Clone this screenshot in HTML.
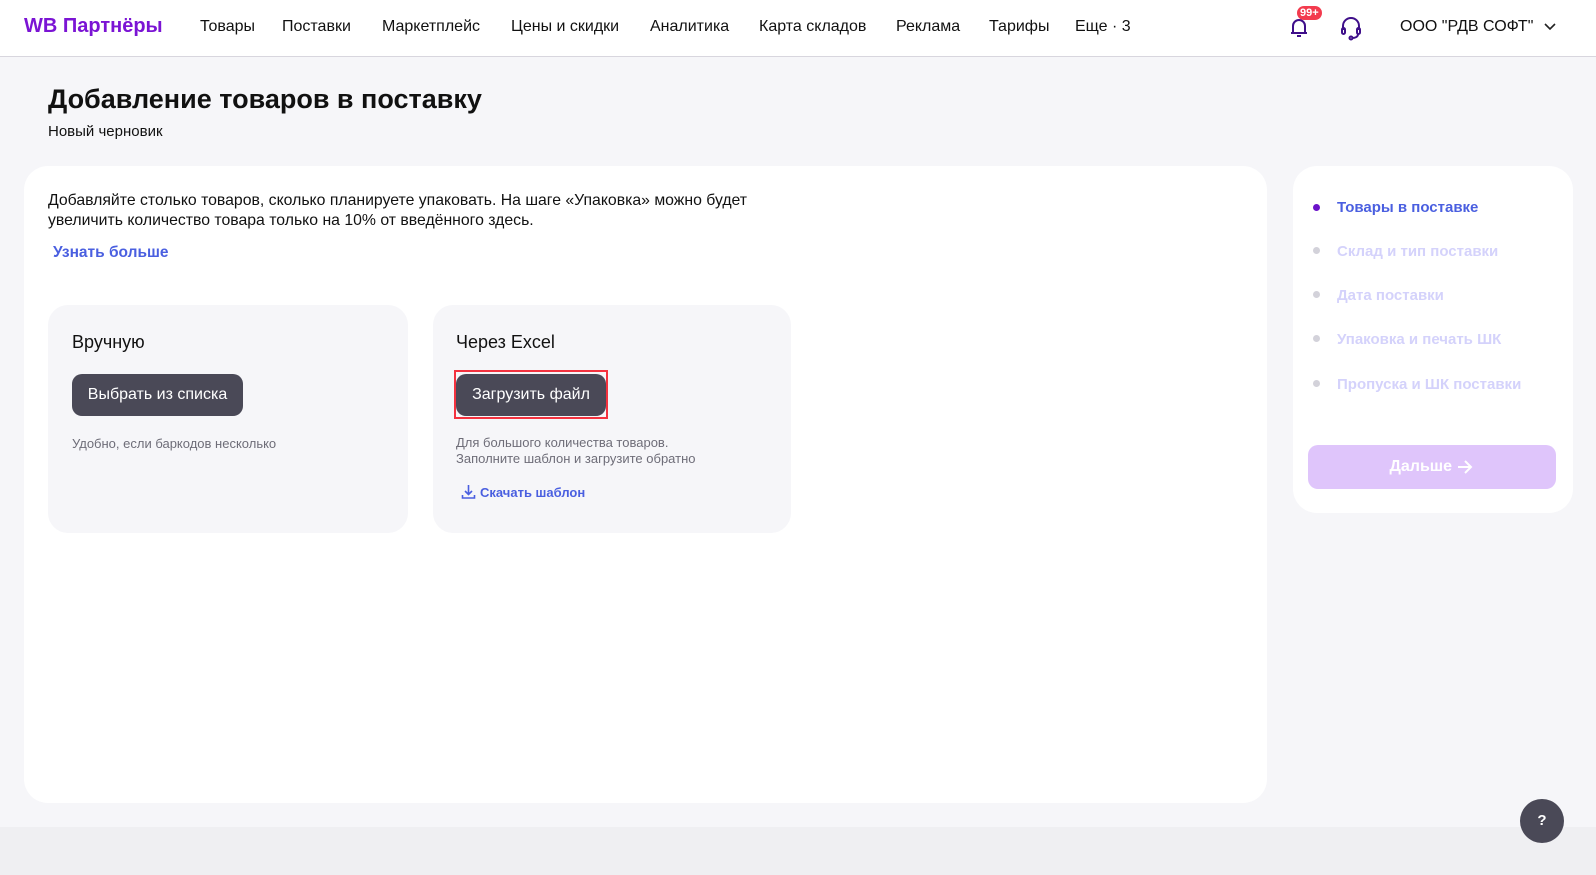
<!DOCTYPE html>
<html><head><meta charset="utf-8"><style>
*{margin:0;padding:0;box-sizing:border-box}
body{width:1596px;height:875px;background:#f6f6f9;font-family:"Liberation Sans",sans-serif;color:#111;position:relative;overflow:hidden}
.a{position:absolute;white-space:nowrap}
header{position:absolute;left:0;top:0;width:1596px;height:57px;background:#fff;border-bottom:1px solid #d8d6de}
.nav{font-size:16px;top:18px;color:#111}
.card{position:absolute;background:#fff;border-radius:24px}
.sub{position:absolute;background:#f6f6f9;border-radius:20px}
.btn{position:absolute;background:#4a4957;color:#fff;border-radius:10px;font-size:16px;display:flex;align-items:center;justify-content:center}
.hint{font-size:13px;color:#6e6d78}
.step{font-size:15px;font-weight:bold;color:#d4d2fb}
.dot{position:absolute;width:7px;height:7px;border-radius:50%;background:#d3d2da}
</style></head><body>
<header>
<div class="a" style="left:24px;top:15px;font-size:20px;font-weight:bold;color:#7b14d4">WB Партнёры</div>
<div class="a nav" style="left:200px">Товары</div>
<div class="a nav" style="left:282px">Поставки</div>
<div class="a nav" style="left:382px">Маркетплейс</div>
<div class="a nav" style="left:511px">Цены и скидки</div>
<div class="a nav" style="left:650px">Аналитика</div>
<div class="a nav" style="left:759px">Карта складов</div>
<div class="a nav" style="left:896px">Реклама</div>
<div class="a nav" style="left:989px">Тарифы</div>
<div class="a nav" style="left:1075px">Еще · 3</div>
<svg class="a" style="left:1287px;top:15px" width="24" height="24" viewBox="0 0 24 24" fill="none" stroke="#3f0f8a" stroke-width="2"><path d="M6 18V11a6 6 0 0 1 12 0v7M4 18h16M10 21h4"/></svg>
<div class="a" style="left:1297px;top:6px;background:#f33b4e;color:#fff;font-size:11px;font-weight:bold;border-radius:8px;padding:1px 3px">99+</div>
<svg class="a" style="left:1339px;top:15px" width="24" height="26" viewBox="0 0 24 26" fill="none" stroke="#3f0f8a" stroke-width="2"><path d="M4 15v-4a8 8 0 0 1 16 0v4"/><rect x="3" y="13" width="3" height="6" rx="1.5"/><rect x="18" y="13" width="3" height="6" rx="1.5"/><path d="M19 19c0 3-3 4-6 4"/><circle cx="12" cy="23" r="1.5"/></svg>
<div class="a" style="left:1400px;top:18px;font-size:16px">ООО "РДВ СОФТ"</div>
<svg class="a" style="left:1543px;top:22px" width="14" height="10" viewBox="0 0 14 10" fill="none" stroke="#222" stroke-width="1.6"><path d="M2 2l5 5 5-5"/></svg>
</header>
<div class="a" style="left:48px;top:84px;font-size:27px;font-weight:bold">Добавление товаров в поставку</div>
<div class="a" style="left:48px;top:123px;font-size:15px">Новый черновик</div>
<div class="card" style="left:24px;top:166px;width:1243px;height:637px">
<div class="a" style="left:24px;top:25px;font-size:15.8px;line-height:20px">Добавляйте столько товаров, сколько планируете упаковать. На шаге «Упаковка» можно будет<br>увеличить количество товара только на 10% от введённого здесь.</div>
<div class="a" style="left:29px;top:78px;font-size:15.5px;font-weight:bold;color:#4a5fe0">Узнать больше</div>
<div class="sub" style="left:24px;top:139px;width:360px;height:228px">
<div class="a" style="left:24px;top:27px;font-size:18px">Вручную</div>
<div class="btn" style="left:24px;top:69px;width:171px;height:42px">Выбрать из списка</div>
<div class="a hint" style="left:24px;top:131px">Удобно, если баркодов несколько</div>
</div>
<div class="sub" style="left:409px;top:139px;width:358px;height:228px">
<div class="a" style="left:23px;top:27px;font-size:18px">Через Excel</div>
<div style="position:absolute;left:21px;top:65px;width:154px;height:49px;border:2px solid #f3323f"></div>
<div class="btn" style="left:23px;top:69px;width:150px;height:42px">Загрузить файл</div>
<div class="a hint" style="left:23px;top:130px;line-height:16px">Для большого количества товаров.<br>Заполните шаблон и загрузите обратно</div>
<svg class="a" style="left:28px;top:179px" width="15" height="16" viewBox="0 0 15 16" fill="none" stroke="#4a5fe0" stroke-width="1.6"><path d="M7.5 1v9M4 7l3.5 3.5L11 7M1.5 11v3h12v-3"/></svg>
<div class="a" style="left:47px;top:180px;font-size:13px;font-weight:bold;color:#4a5fe0">Скачать шаблон</div>
</div>
</div>
<div class="card" style="left:1293px;top:166px;width:280px;height:347px">
<div class="dot" style="left:20px;top:38px;background:#6b12c9"></div>
<div class="a step" style="left:44px;top:33px;color:#4a5fe0">Товары в поставке</div>
<div class="dot" style="left:20px;top:81px"></div>
<div class="a step" style="left:44px;top:77px">Склад и тип поставки</div>
<div class="dot" style="left:20px;top:125px"></div>
<div class="a step" style="left:44px;top:121px">Дата поставки</div>
<div class="dot" style="left:20px;top:169px"></div>
<div class="a step" style="left:44px;top:165px">Упаковка и печать ШК</div>
<div class="dot" style="left:20px;top:214px"></div>
<div class="a step" style="left:44px;top:210px">Пропуска и ШК поставки</div>
<div class="btn" style="left:15px;top:279px;width:248px;height:44px;background:#dfc5fb;font-weight:bold">Дальше&nbsp;<svg width="18" height="16" viewBox="0 0 18 16" fill="none" stroke="#fff" stroke-width="2"><path d="M2 8h13M9 2l6 6-6 6"/></svg></div>
</div>
<div style="position:absolute;left:0;top:827px;width:1596px;height:48px;background:#efeff2"></div>
<div class="a" style="left:1520px;top:799px;width:44px;height:44px;border-radius:50%;background:#4a4957;color:#fff;font-weight:bold;font-size:15px;text-align:center;line-height:44px">?</div>
</body></html>
